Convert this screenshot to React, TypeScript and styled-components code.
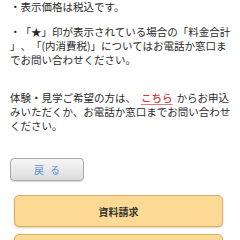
import React from "react";
import styled, { createGlobalStyle } from "styled-components";

const Global = createGlobalStyle`
  html, body { margin: 0; padding: 0; background: #fff; }
  body {
    font-family: "Noto Sans CJK JP", "Noto Sans", sans-serif;
    text-spacing-trim: space-all;
  }
`;

const Page = styled.div`
  width: 240px;
  height: 240px;
  overflow: hidden;
  padding: 0 0 0 10px;
  box-sizing: border-box;
  display: flex;
  flex-direction: column;
`;

const Para = styled.p<{ $gap: number }>`
  margin: 0 0 ${(p) => p.$gap}px;
  font-size: 10.5px;
  line-height: 14px;
  color: #2a2a2a;
  white-space: nowrap;
  flex: none;
  text-spacing-trim: space-all;
`;

const Link = styled.a`
  color: #d23b3b;
  text-decoration: underline;
  text-decoration-color: #e07a7a;
  text-underline-offset: 2px;
  margin: 0 4px 0 5px;
  font-weight: 500;
`;

const BackButton = styled.button`
  width: 74px;
  height: 23px;
  flex: none;
  margin: 0 0 14px;
  padding: 0;
  border: 1px solid #a9a9a9;
  border-radius: 4px;
  background: linear-gradient(#f6f6f6, #dcdcdc);
  color: #5b8fd2;
  font-family: inherit;
  font-size: 10px;
  word-spacing: 4px;
  box-shadow: 0 1px 1px rgba(0, 0, 0, 0.15);
`;

const ActionButton = styled.button`
  align-self: stretch;
  margin: 0 17px 7px 4px;
  height: 32px;
  flex: none;
  border: 1px solid #d8ae6a;
  border-radius: 5px;
  background: #fdda94;
  color: #333;
  font-family: inherit;
  font-size: 10px;
  font-weight: 700;
  box-shadow: 0 1px 2px rgba(150, 110, 40, 0.35);
`;

export default function App() {
  return (
    <>
      <Global />
      <Page>
        <Para $gap={11}>・表示価格は税込です。</Para>
        <Para $gap={24}>
          ・「★」印が表示されている場合の「料金合計
          <br />」、「(内消費税)」についてはお電話か窓口ま
          <br />
          でお問い合わせください。
        </Para>
        <Para $gap={25}>
          体験・見学ご希望の方は、<Link>こちら</Link>からお申込
          <br />
          みいただくか、お電話か窓口までお問い合わせ
          <br />
          ください。
        </Para>
        <BackButton>戻 る</BackButton>
        <ActionButton>資料請求</ActionButton>
        <ActionButton />
      </Page>
    </>
  );
}
